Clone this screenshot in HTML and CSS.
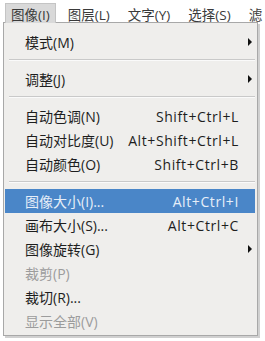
FILE: index.html
```html
<!DOCTYPE html>
<html lang="zh-CN">
<head>
    <meta charset="UTF-8">
    <title>图像菜单</title>
    <link rel="stylesheet" href="styles.css">
</head>
<body>
    <div class="menubar">
        <span class="top-item active">图像(I)</span>
        <span class="top-item">图层(L)</span>
        <span class="top-item">文字(Y)</span>
        <span class="top-item">选择(S)</span>
        <span class="top-item">滤</span>
    </div>
    <div class="menu">
        <div class="item"><span>模式(M)</span><span class="arrow"></span></div>
        <div class="sep"></div>
        <div class="item"><span>调整(J)</span><span class="arrow"></span></div>
        <div class="sep"></div>
        <div class="item"><span>自动色调(N)</span><span class="key">Shift+Ctrl+L</span></div>
        <div class="item"><span>自动对比度(U)</span><span class="key">Alt+Shift+Ctrl+L</span></div>
        <div class="item"><span>自动颜色(O)</span><span class="key">Shift+Ctrl+B</span></div>
        <div class="sep"></div>
        <div class="item hover"><span>图像大小(I)...</span><span class="key">Alt+Ctrl+I</span></div>
        <div class="item"><span>画布大小(S)...</span><span class="key">Alt+Ctrl+C</span></div>
        <div class="item"><span>图像旋转(G)</span><span class="arrow"></span></div>
        <div class="item disabled"><span>裁剪(P)</span></div>
        <div class="item"><span>裁切(R)...</span></div>
        <div class="item disabled"><span>显示全部(V)</span></div>
    </div>
</body>
</html>
```
FILE: styles.css
```css
body {
    margin: 0;
    background: #fff;
    font-family: "Open Sans", "Noto Sans CJK SC", sans-serif;
    font-size: 14px;
    color: #1e1e1e;
    width: 265px;
    height: 341px;
    overflow: hidden;
}
.menubar {
    display: flex;
    height: 22px;
    padding-left: 5px;
    white-space: nowrap;
    font-size: 13.5px;
    color: #3a3a3a;
}
.top-item {
    display: flex;
    align-items: center;
    padding: 0 5px;
    margin-right: 6px;
    margin-top: 3px;
    height: 19px;
    border: 1px solid transparent;
    border-bottom: none;
}
.top-item.active {
    background: #d9d9d9;
    border-color: #c4c4c4;
}
.menu {
    margin-left: 3px;
    width: 255px;
    height: 314px;
    box-sizing: border-box;
    background: #efeeec;
    border: 1px solid #a8a8a8;
    box-shadow: 2px 2px 0 #d0d0d0;
    padding: 7px 2px 0 1px;
}
.item {
    display: flex;
    justify-content: space-between;
    align-items: center;
    height: 24px;
    padding: 0 16px 0 20px;
    position: relative;
}
.item.hover {
    background: #4a86c8;
    color: #e6eef8;
}
.item.disabled {
    color: #9c9c9c;
}
.key {
    letter-spacing: 0.6px;
}
.arrow {
    position: absolute;
    right: 3px;
    top: 8px;
    width: 0;
    height: 0;
    border-top: 4px solid transparent;
    border-bottom: 4px solid transparent;
    border-left: 4px solid #111;
}
.sep {
    height: 1px;
    margin: 5px 0 6px 4px;
    background: #c9c9c9;
    border-bottom: 1px solid #fafafa;
}
```
